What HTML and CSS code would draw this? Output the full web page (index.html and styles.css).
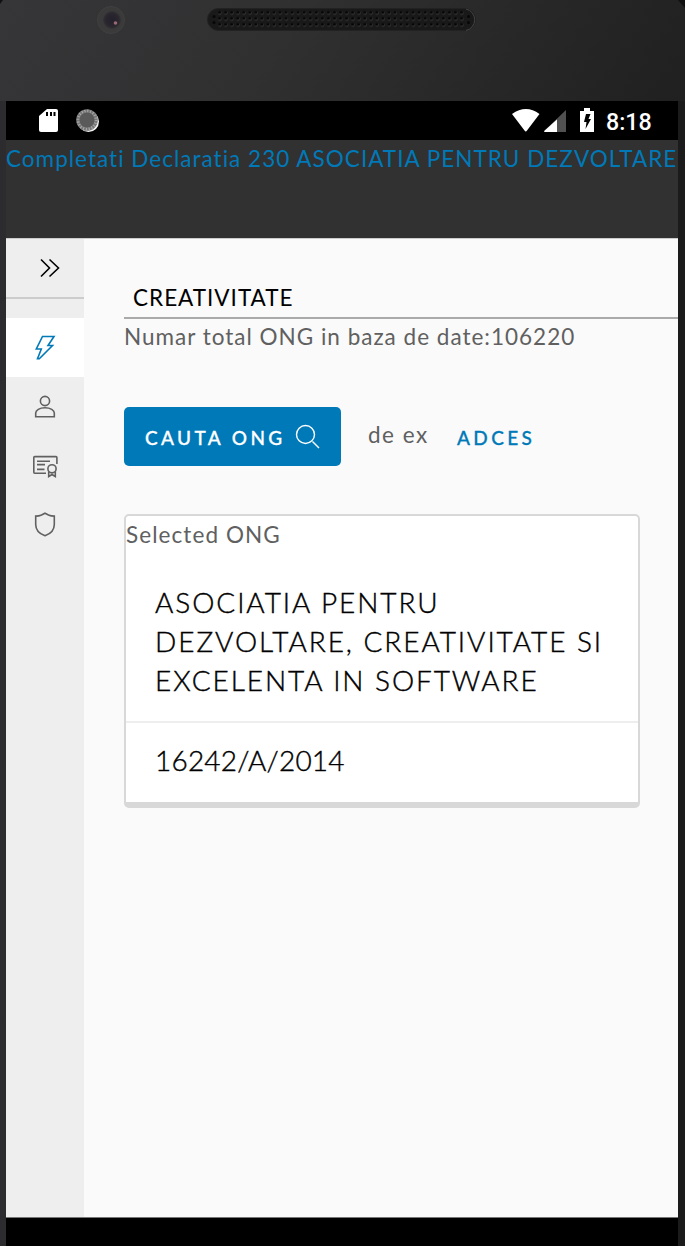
FILE: index.html
```html
<!DOCTYPE html>
<html lang="ro">
<head>
<meta charset="utf-8">
<title>Declaratia 230</title>
<link rel="stylesheet" href="styles.css">
</head>
<body>
<div class="phone">
  <div class="bezel">
    <svg width="685" height="101" viewBox="0 0 685 101">
      <defs>
        <pattern id="holes" x="216.5" y="9.5" width="6.05" height="6" patternUnits="userSpaceOnUse">
          <circle cx="3.2" cy="3.6" r="1.6" fill="#505050"/>
          <circle cx="3" cy="3" r="1.5" fill="#050505"/>
        </pattern>
        <radialGradient id="lens"><stop offset="0" stop-color="#24202c"/><stop offset=".7" stop-color="#29262e"/><stop offset="1" stop-color="#333335"/></radialGradient>
      </defs>
      <path d="M0 0h3L0 4zM678 0h7v8z" fill="#101010"/>
      <circle cx="111" cy="20" r="13.5" fill="#3a3a3b" stroke="#404041"/>
      <circle cx="112" cy="20" r="9" fill="url(#lens)"/>
      <circle cx="115.500" cy="23" r="1.800" fill="#9c6972"/>
      <rect x="207.500" y="8.500" width="268" height="22" rx="11" fill="#191919" stroke="#222"/>
      <path d="M466 9a11 11 0 0 1 0 21.500" fill="none" stroke="#444"/>
      <rect x="216.500" y="10" width="248" height="18" fill="url(#holes)"/>
      <g fill="#070707"><circle cx="214" cy="16.500" r="1.500"/><circle cx="214" cy="22.500" r="1.500"/><circle cx="468.500" cy="16.500" r="1.500"/><circle cx="468.500" cy="22.500" r="1.500"/></g>
    </svg>
  </div>
  <div class="screen">
    <div class="status">
      <svg class="status-left" width="70" height="39" viewBox="0 0 70 39">
        <path d="M8 8h9a2 2 0 0 1 2 2v19a2 2 0 0 1-2 2H2a2 2 0 0 1-2-2V15z" fill="#fff"/>
        <path d="M8 11v4M12 11v4M15.500 11v4" stroke="#000" stroke-width="2"/>
        <circle cx="49.500" cy="20.500" r="10.500" fill="#f4f4f4"/>
        <circle cx="48" cy="19" r="10.800" fill="#777"/>
        <circle cx="48" cy="19" r="9" fill="none" stroke="#aaa" stroke-width="3" stroke-dasharray="1 1.830"/>
        <circle cx="48" cy="19" r="7.500" fill="#5a5a5a"/>
      </svg>
      <svg class="status-right" width="84" height="39" viewBox="0 0 84 39">
        <path d="M0 13Q14 3 27.500 13L15 29.500Q13.800 31.300 12.500 29.500z" fill="#fff"/>
        <path d="M54 9v22H33.500q-2 0-.8-1.500z" fill="#515151"/>
        <path d="M45 18.500V31H33.500q-2.200 0-.8-1.500z" fill="#fff"/>
        <path d="M72 7h6v3h4v21H68V10h4z" fill="#fff"/>
        <path d="M74 13h4.500l-2 5h2.500l-5.500 10 1-7H72z" fill="#000"/>
      </svg>
      <span class="clock">8:18</span>
    </div>
    <header class="header">Completati Declaratia 230 ASOCIATIA PENTRU DEZVOLTARE</header>
    <div class="body">
      <nav class="sidebar">
        <div class="expand"><svg width="22" height="20" viewBox="0 0 22 20"><path d="M2 1.500 10.500 10 2 18.500M10.500 1.500 19.500 10l-9 8.500"/></svg></div>
        <div class="item active"><svg width="24" height="26" viewBox="0 0 24 26"><path d="M9.500 1.500H21L15 10.500H19.500L6.300 23.700H4.500L8.300 14H3.300z"/></svg></div>
        <div class="item"><svg width="22" height="24" viewBox="0 0 22 24"><circle cx="11" cy="6" r="4.600"/><path d="M1.700 21.800v-3.700C1.700 15.100 5.500 12.800 11 12.800s9.300 2.300 9.300 5.300v3.700z"/></svg></div>
        <div class="item"><svg width="26" height="24" viewBox="0 0 26 24"><path d="M14 19.200H2.700q-.9 0-.9-.9V3.500q0-.9.900-.9h21.300q.9 0 .9.900V10M5 7.200h13M5 10.600h8M5 15.400h7.500"/><circle cx="20" cy="14.800" r="4.100"/><path d="M16.700 17.500v5l3.300-2 3.300 2v-5"/></svg></div>
        <div class="item"><svg width="22" height="26" viewBox="0 0 22 26"><path d="M11 1.200 14.500 3Q17 4.100 20.300 4.100V12.500C20.300 18 16 22 11 23.700 6 22 1.700 18 1.700 12.500V4.100Q5 4.100 7.500 3z"/></svg></div>
      </nav>
      <main class="content">
        <div class="search-field"><span class="query">CREATIVITATE</span></div>
        <div class="total">Numar total ONG in baza de date:106220</div>
        <div class="actions">
          <button class="search-button"><span class="button-label">CAUTA ONG</span><svg width="26" height="26" viewBox="0 0 26 26"><circle cx="10.500" cy="10.500" r="9"/><path d="m17.500 17.500 6.500 6.500"/></svg></button>
          <span class="example">de ex</span>
          <a class="adces">ADCES</a>
        </div>
        <section class="card">
          <div class="selected">Selected ONG</div>
          <h3 class="card-title"><span class="line one">ASOCIATIA PENTRU</span><span class="line two">DEZVOLTARE, CREATIVITATE SI</span><span class="line three">EXCELENTA IN SOFTWARE</span></h3>
          <div class="card-code"><span class="code">16242/A/2014</span></div>
        </section>
      </main>
    </div>
    <div class="navbar"></div>
  </div>
</div>
</body>
</html>
```
FILE: styles.css
```css
* { box-sizing: border-box; }
body { margin: 0; font-family: Lato, "Open Sans", sans-serif; font-weight: 400; color: #606060; }
svg { display: block; flex: none; }
.phone { width: 685px; height: 1246px; overflow: hidden; background: linear-gradient(90deg, #2c2c2e, #1b1b1b 98%); }
.bezel { height: 101px; background: linear-gradient(125deg, #363638 0%, #303031 40%, #242424 85%, #202020 100%); }
.screen { width: 672px; height: 1145px; margin-left: 6px; display: flex; flex-direction: column; overflow: hidden; }
.status { height: 39px; background: #000; display: flex; align-items: center; padding-left: 33px; }
.status-right { margin-left: 403px; }
.clock { margin-left: 10px; padding-top: 2px; font: 500 23.2px/28px Roboto, sans-serif; color: #fff; }
.header { height: 98px; padding-top: 4px; background: #313131; color: #0079b8; font-size: 22.5px; line-height: 30px; letter-spacing: 1.02px; white-space: nowrap; overflow: hidden; }
.body { height: 979px; display: flex; background: #fafafa; border-top: 1px solid #ccc; }
.sidebar { width: 78px; background: #eee; flex: none; }
.sidebar svg { fill: none; stroke: currentColor; stroke-width: 1.6; }
.search-button svg { fill: none; stroke: currentColor; stroke-width: 1.4; margin-left: -1px; }
.expand { height: 60px; margin-bottom: 19px; border-bottom: 2px solid #ccc; display: flex; align-items: center; padding-left: 33px; color: #000; }
.item { height: 59px; display: flex; align-items: center; justify-content: center; }
.active { background: #fff; color: #0079b8; }
.content { width: 594px; padding-left: 40px; padding-top: 42px; flex: none; }
.search-field { height: 38px; border-bottom: 2px solid #aaa; padding-left: 9px; line-height: 34px; font-size: 22.5px; letter-spacing: 1px; color: #000; }
.total { height: 38px; line-height: 36px; font-size: 22.5px; letter-spacing: 1px; white-space: nowrap; }
.actions { display: flex; align-items: center; height: 59px; margin-top: 50px; }
.search-button { width: 217px; height: 59px; border: 0; border-radius: 5px; background: #0079b8; color: #fff; display: flex; align-items: center; padding: 0 0 0 21px; font: 500 19px/24px Lato, sans-serif; letter-spacing: 3.4px; -webkit-text-stroke: .3px; }
.button-label { width: 151px; padding-top: 3px; text-align: left; white-space: nowrap; }
.example { width: 89px; padding: 0 0 4px 27px; font-size: 22.5px; line-height: 30px; letter-spacing: 1.5px; white-space: nowrap; }
.adces { margin-left: 27px; padding-top: 3px; font-size: 19px; line-height: 24px; font-weight: 500; color: #0079b8; letter-spacing: 3.4px; -webkit-text-stroke: .3px; }
.card { width: 516px; height: 294px; margin-top: 48px; background: #fff; border: 2px solid #d8d8d8; border-bottom-width: 6px; border-radius: 5px; }
.selected { height: 38px; line-height: 37px; font-size: 22.5px; letter-spacing: 1.08px; }
.card-title { height: 169px; margin: 0; padding: 29px 0 0 29px; border-bottom: 2px solid #eee; color: #000; font-weight: 300; font-size: 28px; line-height: 39px; letter-spacing: 1.93px; white-space: nowrap; -webkit-text-stroke: .4px; }
.line { display: block; }
.card-code { padding: 18px 0 0 29px; color: #000; font-size: 28px; font-weight: 300; line-height: 39px; letter-spacing: .2px; -webkit-text-stroke: .4px; }
.navbar { flex: 1; background: #000; border-top: 1px solid #777; }
```
